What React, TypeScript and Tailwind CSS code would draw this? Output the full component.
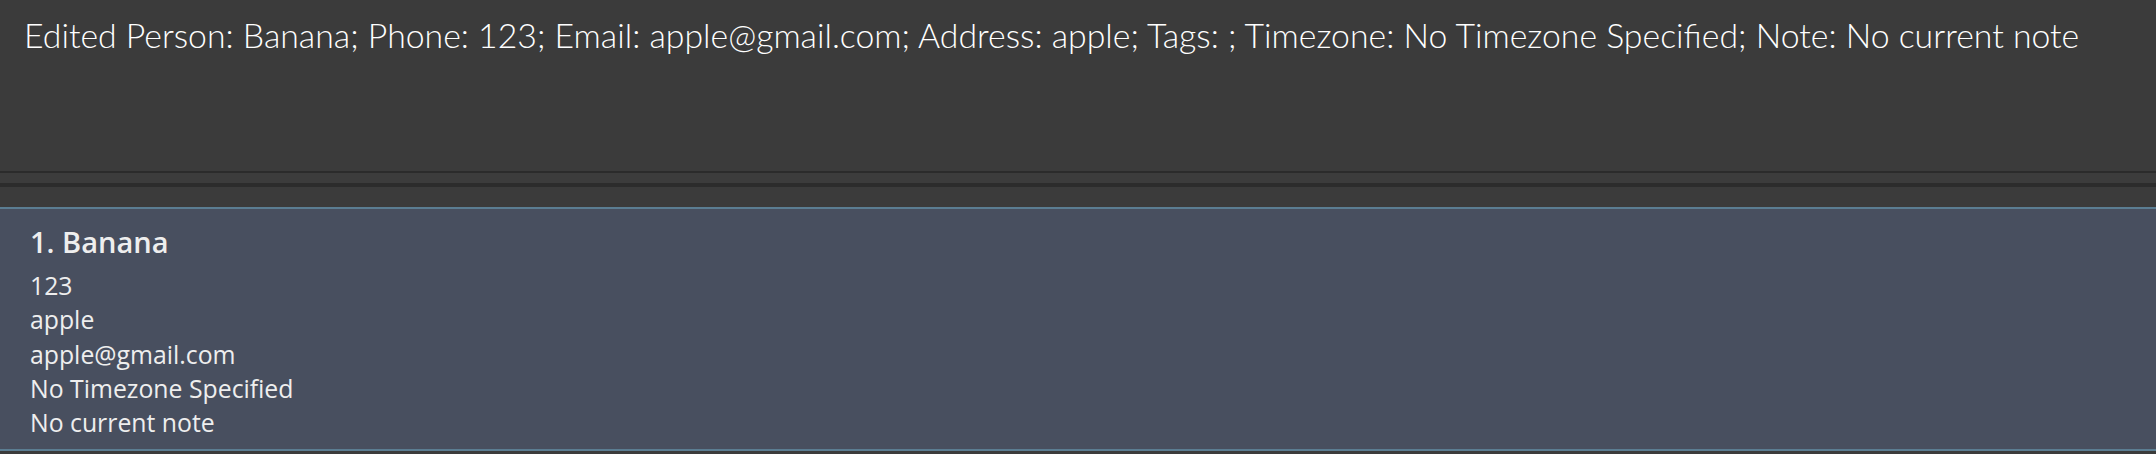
const details = ['123', 'apple', 'apple@gmail.com', 'No Timezone Specified', 'No current note'];

export default function App() {
  return (
    <div className="flex h-[454px] w-[2156px] flex-col overflow-hidden bg-[#3b3b3b]">
      {/* result display */}
      <div className="h-[171px] shrink-0 bg-[#3b3b3b] pl-[24px] pt-[12px]">
        <p className="whitespace-nowrap text-[33.8px] font-light leading-[46px] text-white [font-family:Lato,'Open_Sans',sans-serif]">
          Edited Person: Banana; Phone: 123; Email: apple@gmail.com; Address: apple; Tags: ; Timezone: No Timezone Specified; Note: No current note
        </p>
      </div>
      <div className="h-[2px] shrink-0 bg-[#2b2b2b]" />
      <div className="h-[10px] shrink-0 bg-[#3c3c3c]" />
      <div className="h-[4px] shrink-0 bg-[#2c2c2c]" />
      <div className="h-[20px] shrink-0 bg-[#3b3b3b]" />

      {/* person card */}
      <div className="h-[244px] shrink-0 border-y-2 border-[#5b7d92] bg-[#484f5f] pl-[30px] pt-[13px] text-[#eeeeee] [font-family:'Open_Sans','Noto_Sans',sans-serif]">
        <div className="text-[29px] font-semibold leading-[40px]">1. Banana</div>
        <div className="mt-[6px] flex flex-col">
          {details.map((d) => (
            <span key={d} className="text-[24.8px] leading-[34.3px]">
              {d}
            </span>
          ))}
        </div>
      </div>
    </div>
  );
}
